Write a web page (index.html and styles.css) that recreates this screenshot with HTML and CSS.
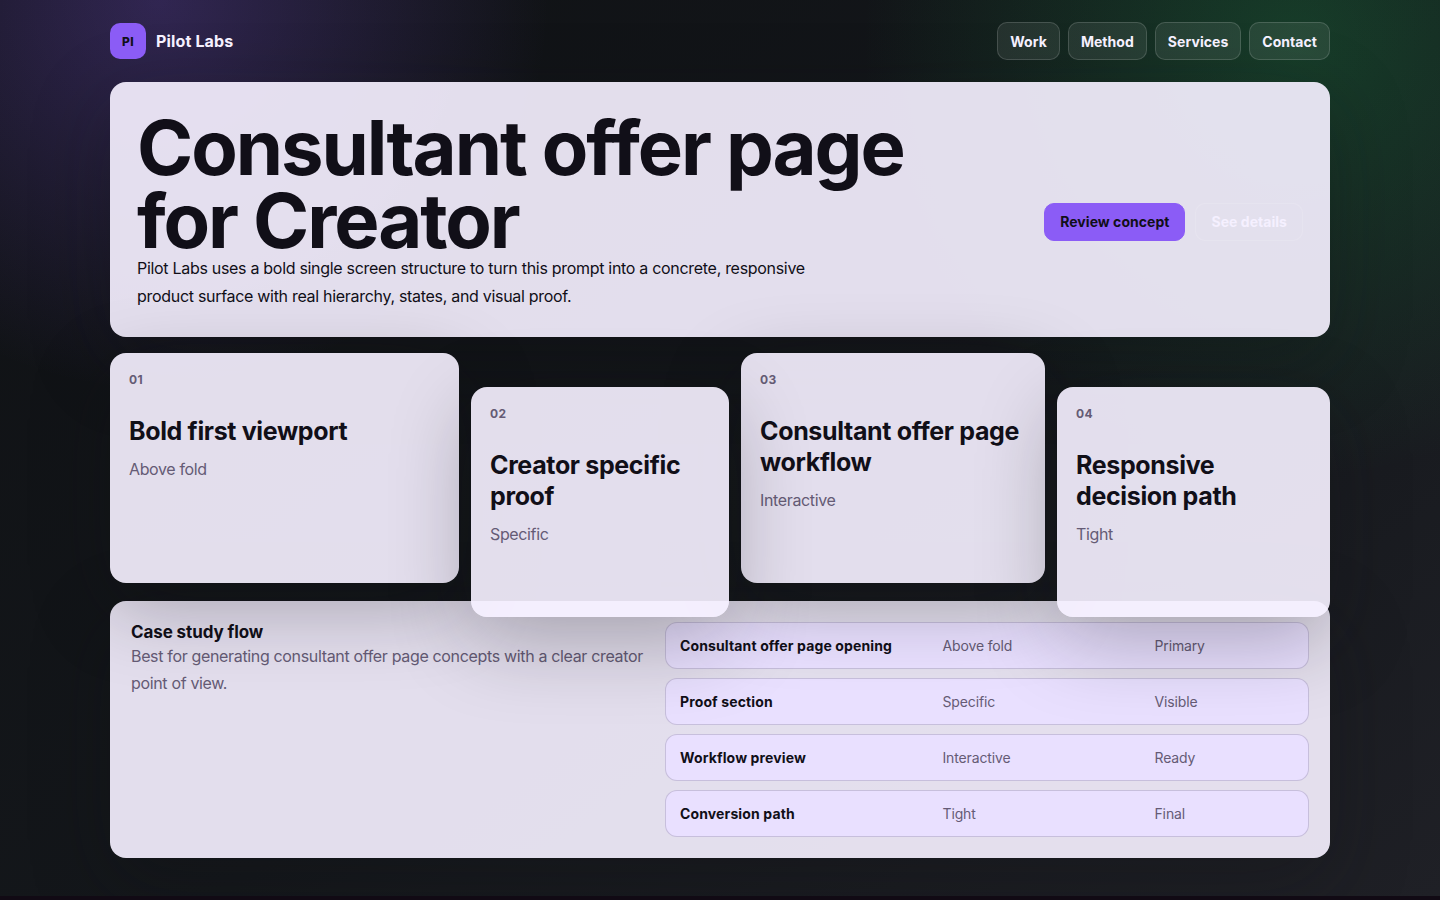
FILE: index.html
```html
<!DOCTYPE html>
<html lang="en">
<head>
<meta charset="utf-8">
<title>Pilot Labs</title>
<link rel="stylesheet" href="styles.css">
</head>
<body>
<div class="page">
  <header class="topbar">
    <div class="brand"><span class="mark">PI</span><span>Pilot Labs</span></div>
    <nav class="nav"><a>Work</a><a>Method</a><a>Services</a><a>Contact</a></nav>
  </header>
  <main class="main">
    <section class="hero">
      <div>
        <h1>Consultant offer page for Creator</h1>
        <p>Pilot Labs uses a bold single screen structure to turn this prompt into a concrete, responsive product surface with real hierarchy, states, and visual proof.</p>
      </div>
      <div class="actions"><a class="btn primary">Review concept</a><a class="btn">See details</a></div>
    </section>
    <section class="cards">
      <article class="card"><span>01</span><h2>Bold first viewport</h2><p>Above fold</p></article>
      <article class="card"><span>02</span><h2>Creator specific proof</h2><p>Specific</p></article>
      <article class="card"><span>03</span><h2>Consultant offer page workflow</h2><p>Interactive</p></article>
      <article class="card"><span>04</span><h2>Responsive decision path</h2><p>Tight</p></article>
    </section>
    <section class="flow">
      <div>
        <h3>Case study flow</h3>
        <p>Best for generating consultant offer page concepts with a clear creator point of view.</p>
      </div>
      <div class="rows">
        <div class="row"><strong>Consultant offer page opening</strong><span>Above fold</span><span>Primary</span></div>
        <div class="row"><strong>Proof section</strong><span>Specific</span><span>Visible</span></div>
        <div class="row"><strong>Workflow preview</strong><span>Interactive</span><span>Ready</span></div>
        <div class="row"><strong>Conversion path</strong><span>Tight</span><span>Final</span></div>
      </div>
    </section>
  </main>
</div>
</body>
</html>
```
FILE: styles.css
```css
* { box-sizing: border-box; }
html { background: #110a14; }
body {
  margin: 0;
  font-family: Inter, "Liberation Sans", sans-serif;
  font-size: 16px;
  color: #f5f0ff;
}
h1, h2, h3, p { margin: 0; }
.page {
  height: 896px;
  padding: 22px 110px 38px;
  background:
    radial-gradient(circle at 11% 0%, rgba(139, 92, 246, .27), transparent 25%),
    radial-gradient(circle at 90% 5%, rgba(34, 197, 94, .22), transparent 28%),
    linear-gradient(145deg, #0f1114, #14171b 55%, #1f2026);
}
.topbar { display: flex; justify-content: space-between; align-items: center; height: 38px; }
.brand { display: flex; align-items: center; gap: 10px; font-weight: 700; letter-spacing: .15px; }
.mark {
  display: grid; place-items: center; width: 36px; height: 36px; border-radius: 10px;
  background: #8b5cf6; color: #110f18; font-size: 12px; font-weight: 800; letter-spacing: .4px;
}
.nav { display: flex; gap: 8px; }
.nav a, .btn {
  display: flex; align-items: center; height: 38px; padding: 0 12px;
  border: 1px solid rgba(255, 255, 255, .15); border-radius: 10px;
  background: rgba(255, 255, 255, .08); font-size: 14px; font-weight: 700; letter-spacing: .05px;
}
.main { margin-top: 22px; }
.hero, .card, .flow {
  border: 1px solid transparent; border-radius: 16px;
  background: rgba(245, 240, 255, .92) border-box; color: #110f18;
  box-shadow: 0 24px 80px rgba(16, 18, 22, .29);
}
.hero {
  display: flex; justify-content: space-between; align-items: flex-end;
  height: 255px; padding: 26px;
}
.hero h1 {
  width: 800px; position: relative; top: 3px;
  font-size: 76px; line-height: 73px; font-weight: 700; letter-spacing: -2.05px;
}
.hero p { width: 690px; line-height: 28px; letter-spacing: -.3px; }
.actions { display: flex; gap: 10px; padding-bottom: 69px; }
.btn {
  padding: 0 15px 2px; color: #f5f0ff; letter-spacing: .04px;
  background: rgba(255, 255, 255, .02); border-color: rgba(255, 255, 255, .12);
}
.btn.primary { background: #8b5cf6; border-color: #8b5cf6; color: #110f18; }
.cards {
  position: relative; z-index: 1; margin-top: 16px;
  display: grid; grid-template-columns: 349px 258px 304px 273px; gap: 12px;
}
.card { height: 230px; padding: 18px; }
.card:nth-child(even) { transform: translateY(34px); }
.card span { display: block; font-size: 12px; line-height: 16px; font-weight: 700; letter-spacing: .45px; color: #655b75; }
.card h2 { margin-top: 28px; font-size: 25px; line-height: 31px; font-weight: 700; letter-spacing: -.35px; }
.card p { margin-top: 9px; line-height: 27px; letter-spacing: -.36px; color: #655b75; }
.flow {
  display: grid; grid-template-columns: 514px 644px; gap: 20px;
  height: 257px; margin-top: 18px; padding: 20px;
}
.flow h3 { font-size: 17px; line-height: 21px; font-weight: 700; letter-spacing: -.1px; }
.flow p { line-height: 27px; letter-spacing: -.34px; color: #655b75; }
.rows { display: grid; gap: 9px; align-content: start; }
.row {
  display: grid; grid-template-columns: 252.5px 202px 1fr; column-gap: 10px; align-items: center;
  height: 47px; padding: 0 14px;
  border: 1px solid rgba(101, 91, 117, .25); border-radius: 12px;
  background: #e9e0ff; font-size: 14px;
}
.row strong { letter-spacing: .13px; }
.row span { color: #655b75; letter-spacing: -.14px; }
```
